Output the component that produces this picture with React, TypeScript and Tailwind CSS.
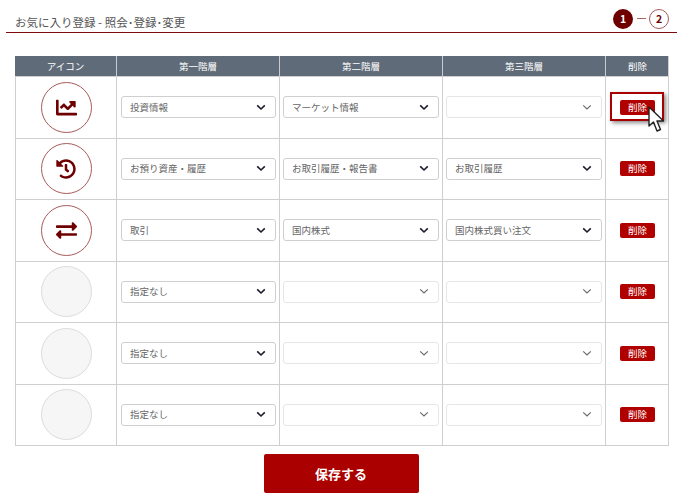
import { FaChartLine, FaHistory, FaExchangeAlt } from "react-icons/fa";
import type { ReactNode } from "react";

const font = "font-['Noto_Sans_CJK_JP','Noto_Sans',sans-serif]";

function Chevron({ off }: { off?: boolean }) {
  return (
    <svg width="10" height="7" viewBox="0 0 10 7" className="shrink-0">
      <path d="M1.2 1.4 L5 5 L8.8 1.4" fill="none" stroke={off ? "#6b6b6b" : "#1b1b2b"} strokeWidth={off ? 1.2 : 1.6} />
    </svg>
  );
}

function Sel({ value, off }: { value?: string; off?: boolean }) {
  return (
    <div className={`h-[22px] flex-1 flex items-center justify-between rounded-[3px] border pl-[8px] pr-[9px] ${off ? "border-[#e6e6e6]" : "border-[#cfcfcf]"}`}>
      <span className="text-[9.5px] leading-none text-[#666]">{value}</span>
      <Chevron off={off} />
    </div>
  );
}

function Icon({ children }: { children?: ReactNode }) {
  return (
    <div className={`w-[51px] h-[51px] rounded-full flex items-center justify-center border ${children ? "border-[#a85a5a] text-[#6e0000]" : "border-[#dcdcdc] bg-[#f6f6f6]"}`}>
      {children}
    </div>
  );
}

const rows: { icon?: ReactNode; a: string; b: string; c: string }[] = [
  { icon: <FaChartLine size={21} />, a: "投資情報", b: "マーケット情報", c: "" },
  { icon: <FaHistory size={20} />, a: "お預り資産・履歴", b: "お取引履歴・報告書", c: "お取引履歴" },
  { icon: <FaExchangeAlt size={21} />, a: "取引", b: "国内株式", c: "国内株式買い注文" },
  { a: "指定なし", b: "", c: "" },
  { a: "指定なし", b: "", c: "" },
  { a: "指定なし", b: "", c: "" },
];

const cols = "grid grid-cols-[101px_163px_163px_163px_64px]";

export default function App() {
  return (
    <div className={`relative w-[680px] h-[502px] bg-white overflow-hidden ${font}`}>
      <div className="ml-[6px] mr-[3px] h-[33px] pl-[9px] pr-[8px] flex items-end justify-between border-b-[1.5px] border-[#7a0c0c]">
        <span className="text-[11.5px] leading-none text-[#555] mb-[4px]">お気に入り登録 - 照会･登録･変更</span>
        <div className="flex items-center mb-[3.5px]">
          <span className="w-[20px] h-[20px] rounded-full bg-[#6e0000] text-white text-[10.5px] font-bold flex items-center justify-center">1</span>
          <span className="w-[9px] h-[1px] bg-[#a66] ml-[4px] mr-[3px]" />
          <span className="w-[20px] h-[20px] rounded-full border border-[#a85a5a] text-[#6e0000] text-[10.5px] font-bold flex items-center justify-center">2</span>
        </div>
      </div>

      <div className="mt-[23px] mx-[15px] w-[654px] border-r border-b border-[#cfcfcf]">
        <div className={`${cols} h-[20px] bg-[#5f6b78] text-white text-[9.5px]`}>
          {["アイコン", "第一階層", "第二階層", "第三階層", "削除"].map((t, i) => (
            <div key={t} className={`flex items-center justify-center ${i ? "border-l border-[#c8ccd0]" : ""}`}>{t}</div>
          ))}
        </div>
        {rows.map((r, i) => (
          <div key={i} className={`${cols} h-[61.5px] border-t border-[#cfcfcf]`}>
            <div className="flex items-center justify-center border-l border-[#cfcfcf]"><Icon>{r.icon}</Icon></div>
            <div className="flex items-center pl-[4px] pr-[3px] border-l border-[#cfcfcf]"><Sel value={r.a} /></div>
            <div className="flex items-center pl-[3px] pr-[3px] border-l border-[#cfcfcf]"><Sel value={r.b} off={!r.b} /></div>
            <div className="flex items-center pl-[3px] pr-[3px] border-l border-[#cfcfcf]"><Sel value={r.c} off={!r.c} /></div>
            <div className="flex items-center justify-center border-l border-[#cfcfcf]">
              <span className="w-[35px] h-[15px] rounded-[2px] bg-[#b00000] text-white text-[9.5px] leading-none flex items-center justify-center">削除</span>
            </div>
          </div>
        ))}
      </div>

      <div className="flex justify-center mt-[8px] ml-[2px]">
        <button className="w-[155px] h-[39px] rounded-[2px] bg-[#aa0000] text-white text-[13px] font-bold flex items-center justify-center">保存する</button>
      </div>

      <div className="absolute left-[610px] top-[92px] w-[54px] h-[29px] border-[2px] border-[#a80000] shadow-[2px_2px_4px_rgba(0,0,0,0.45)]" />
      <svg className="absolute left-[646px] top-[105px]" width="22" height="30" viewBox="0 0 22 30">
        <path d="M3 2 L3 21 L7.5 17 L11 26 L14.5 24.5 L11 16 L17.5 16 Z" fill="#fff" stroke="#222" strokeWidth="1.4" strokeLinejoin="round" />
      </svg>
    </div>
  );
}
